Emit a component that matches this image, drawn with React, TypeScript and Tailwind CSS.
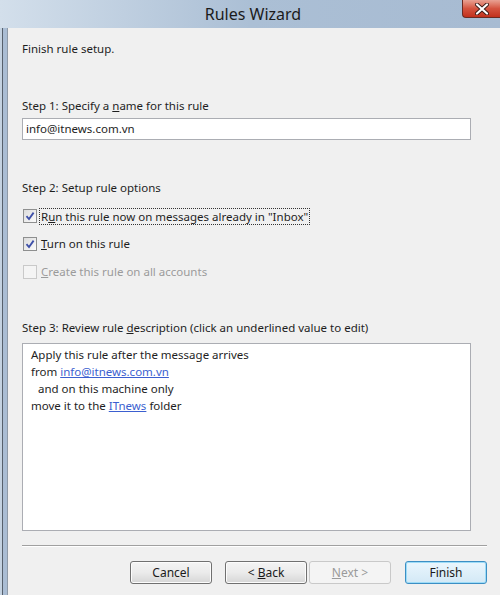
import React from 'react';

const font = { fontFamily: '"Noto Sans", "Open Sans", sans-serif' };

function Check({ checked, disabled }: { checked?: boolean; disabled?: boolean }) {
  return (
    <span
      className={`flex h-[14px] w-[14px] shrink-0 items-center justify-center border ${
        disabled ? 'border-[#c9c9c9] bg-[#f4f4f4]' : 'border-[#8e8f8f] bg-gradient-to-br from-[#dcdcdc] to-[#fbfbfb]'
      }`}
    >
      {checked && (
        <svg width="10" height="10" viewBox="0 0 10 10">
          <path d="M1.5 5.2 L4 8 L8.6 1.6" fill="none" stroke="#3d4fa8" strokeWidth="1.8" />
        </svg>
      )}
    </span>
  );
}

function Button({ children, primary, disabled }: { children: React.ReactNode; primary?: boolean; disabled?: boolean }) {
  return (
    <div
      className={`flex h-[23px] w-[82px] items-center justify-center rounded-[3px] border text-[12px] ${
        primary
          ? 'border-[#3c8fc4] bg-gradient-to-b from-[#eaf6fd] to-[#d3e9f6] text-[#1a1a1a] shadow-[inset_0_0_0_1px_#9edcf7]'
          : disabled
          ? 'border-[#c9c9c9] bg-[#f4f4f4] text-[#9a9a9a]'
          : 'border-[#707070] bg-gradient-to-b from-[#f4f4f4] via-[#ebebeb] to-[#d6d6d6] text-[#1a1a1a] shadow-[inset_0_0_0_1px_#fcfcfc]'
      }`}
    >
      <span>{children}</span>
    </div>
  );
}

export default function App() {
  return (
    <div className="flex h-[595px] w-[500px] flex-col overflow-hidden bg-[#aabdd4]" style={font}>
      {/* title bar */}
      <div className="relative flex h-[28px] shrink-0 items-center justify-center bg-gradient-to-r from-[#d3dfeb] via-[#abbfd5] to-[#a7bbd2]">
        <span className="ml-[6px] text-[16px] text-[#1b1b1b]">Rules Wizard</span>
        <div className="absolute right-0 top-0 flex h-[18px] w-[38px] items-center justify-center rounded-bl-[4px] border-b border-l border-[#6b2a22] bg-gradient-to-b from-[#e8a193] via-[#d4533f] to-[#c2301c]">
          <svg width="14" height="12" viewBox="0 0 14 12">
            <path d="M2 1.5 L12 10.5 M12 1.5 L2 10.5" stroke="#3a1a16" strokeWidth="4" strokeLinecap="round" />
            <path d="M2 1.5 L12 10.5 M12 1.5 L2 10.5" stroke="#ffffff" strokeWidth="2.2" strokeLinecap="round" />
          </svg>
        </div>
      </div>

      <div className="flex flex-1">
        {/* left window frame */}
        <div className="flex w-[8px] shrink-0">
          <div className="w-[2px] bg-[#c4d2e1]" />
          <div className="w-[1px] bg-[#56606c]" />
          <div className="w-[4px] bg-[#aabdd4]" />
          <div className="w-[1px] bg-[#8e9aa8]" />
        </div>

        {/* dialog body */}
        <div className="flex flex-1 flex-col bg-[#f0f0f0] pl-[14px] pr-[14px] text-[11.5px] leading-[16px] text-[#1e1e1e]">
          <div className="mt-[13px]">Finish rule setup.</div>

          <div className="mt-[41px]">
            Step 1: Specify a <span className="underline">n</span>ame for this rule
          </div>
          <div className="mr-[16px] mt-[4px] flex h-[22px] items-center border border-[#abadb3] bg-white pl-[3px]">
            info@itnews.com.vn
          </div>

          <div className="mt-[40px]">Step 2: Setup rule options</div>

          <div className="mt-[11px] flex flex-col gap-[10px]">
            <div className="flex h-[18px] items-center gap-[2px] pl-[1px]">
              <Check checked />
              <span className="border border-dotted border-[#333] px-[1px] leading-[15px]">
                R<span className="underline">u</span>n this rule now on messages already in "Inbox"
              </span>
            </div>
            <div className="flex h-[18px] items-center gap-[4px] pl-[1px]">
              <Check checked />
              <span>
                <span className="underline">T</span>urn on this rule
              </span>
            </div>
            <div className="flex h-[18px] items-center gap-[4px] pl-[1px] text-[#9b9b9b]">
              <Check disabled />
              <span>
                <span className="underline">C</span>reate this rule on all accounts
              </span>
            </div>
          </div>

          <div className="mt-[39px]">
            Step 3: Review rule <span className="underline">d</span>escription (click an underlined value to edit)
          </div>
          <div className="mr-[16px] mt-[7px] flex h-[188px] flex-col border border-[#abadb3] bg-white pl-[8px] pt-[2px] leading-[17px]">
            <div>Apply this rule after the message arrives</div>
            <div>
              from <span className="text-[#3b5fd0] underline">info@itnews.com.vn</span>
            </div>
            <div className="pl-[7px]">and on this machine only</div>
            <div>
              move it to the <span className="text-[#3b5fd0] underline">ITnews</span> folder
            </div>
          </div>

          <div className="mt-[14px] h-[2px] border-t border-b border-t-[#a0a0a0] border-b-white" />

          <div className="mt-[14px] flex items-center">
            <div className="ml-[108px]">
              <Button>Cancel</Button>
            </div>
            <div className="ml-[13px]">
              <Button>
                &lt; <span className="underline">B</span>ack
              </Button>
            </div>
            <div className="ml-[2px]">
              <Button disabled>
                <span className="underline">N</span>ext &gt;
              </Button>
            </div>
            <div className="ml-[14px]">
              <Button primary>Finish</Button>
            </div>
          </div>
        </div>
      </div>
    </div>
  );
}
